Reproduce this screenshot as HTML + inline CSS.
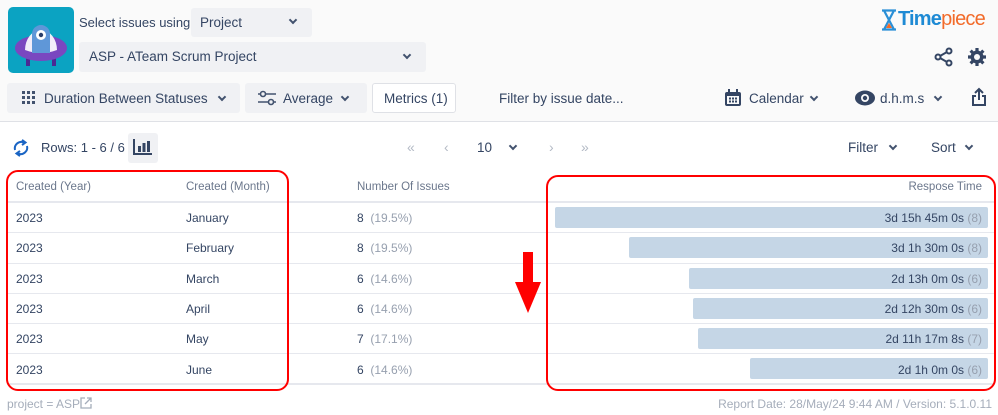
<!DOCTYPE html>
<html><head><meta charset="utf-8"><style>
*{box-sizing:border-box;margin:0;padding:0}
body{width:998px;height:415px;background:#fff;font-family:"Liberation Sans",sans-serif;color:#344563;position:relative;overflow:hidden;font-size:13px}
.a{position:absolute}
.hdr{left:0;top:0;width:998px;height:122px;background:#fafafa;border-bottom:1px solid #dfe1e6}
.dd{background:#f0f1f4;border-radius:3px}
.chev{display:inline-block;width:6px;height:6px;border-right:2px solid #42526e;border-bottom:2px solid #42526e;transform:rotate(45deg)}
.t{white-space:nowrap}
.m{font-size:13.5px}
.line{left:8px;width:986px;height:2px;background:#e6e8ee}
.bar{height:21px;background:#c5d6e6;border-radius:2px;right:10px}
.bt{right:16px;font-size:12px;color:#344563}
.g{color:#97a0af}
.c{font-size:12px}
</style></head><body>
<div class="a hdr"></div>
<!-- logo -->
<div class="a" style="left:8px;top:7px;width:66px;height:66px;background:#0ba3c2;border-radius:5px;overflow:hidden">
<svg width="66" height="66" viewBox="0 0 66 66"><rect x="18" y="48" width="4" height="11" fill="#4b2a94"/><rect x="44" y="48" width="4" height="11" fill="#4b2a94"/><ellipse cx="33" cy="41" rx="26" ry="13" fill="#7a47c0"/><path d="M17 43 A16 20 0 0 1 49 43 Q33 49 17 43z" fill="#ffffff" opacity="0.9"/><path d="M24 46 V27 a9 9 0 0 1 18 0 V46 z" fill="#5f97d8"/><circle cx="33" cy="28" r="5" fill="#fff"/><circle cx="33" cy="28" r="2.2" fill="#2a3f6b"/></svg></div>
<div class="a t" style="left:79px;top:15px;font-size:13px">Select issues using</div>
<div class="a dd" style="left:191px;top:8px;width:121px;height:29px"></div>
<div class="a t m" style="left:200px;top:15px">Project</div>
<div class="a chev" style="left:290px;top:17px"></div>
<div class="a dd" style="left:79px;top:42px;width:347px;height:30px"></div>
<div class="a t m" style="left:89px;top:49px">ASP - ATeam Scrum Project</div>
<div class="a chev" style="left:404px;top:52px"></div>
<!-- timepiece -->
<svg class="a" style="left:881px;top:9px" width="16" height="22" viewBox="0 0 16 22"><path d="M1 1.5H15M1 20.5H15M3 1.5 L13 20.5M13 1.5 L3 20.5" stroke="#2a8fd6" stroke-width="2.2" fill="none"/><path d="M5 19 L8 14 L11 19z" fill="#f26b2a"/></svg>
<div class="a t" style="left:898px;top:8px;font-size:20px;font-weight:bold;color:#1e8ad4;letter-spacing:-0.8px">Time<span style="color:#f26b2a;font-weight:normal">piece</span></div>
<svg class="a" style="left:934px;top:47px" width="20" height="20" viewBox="0 0 20 20"><circle cx="15" cy="4" r="2.5" fill="none" stroke="#344563" stroke-width="2"/><circle cx="4" cy="10" r="2.5" fill="none" stroke="#344563" stroke-width="2"/><circle cx="15" cy="16" r="2.5" fill="none" stroke="#344563" stroke-width="2"/><path d="M6 9 L13 5 M6 11 L13 15" stroke="#344563" stroke-width="2"/></svg>
<svg class="a" style="left:967px;top:47px" width="20" height="20" viewBox="0 0 20 20"><g stroke="#344563" stroke-width="3.2"><path d="M10 1V19M1 10H19M3.6 3.6L16.4 16.4M16.4 3.6L3.6 16.4"/></g><circle cx="10" cy="10" r="6.5" fill="#344563"/><circle cx="10" cy="10" r="3" fill="#fafafa"/></svg>
<!-- row 2 -->
<div class="a dd" style="left:7px;top:83px;width:233px;height:30px"></div>
<svg class="a" style="left:22px;top:91px" width="14" height="14"><g fill="#42526e"><rect x="0" y="0" width="3" height="3"/><rect x="5" y="0" width="3" height="3"/><rect x="10" y="0" width="3" height="3"/><rect x="0" y="5" width="3" height="3"/><rect x="5" y="5" width="3" height="3"/><rect x="10" y="5" width="3" height="3"/><rect x="0" y="10" width="3" height="3"/><rect x="5" y="10" width="3" height="3"/><rect x="10" y="10" width="3" height="3"/></g></svg>
<div class="a t m" style="left:44px;top:91px">Duration Between Statuses</div>
<div class="a chev" style="left:219px;top:94px"></div>
<div class="a dd" style="left:245px;top:83px;width:122px;height:30px"></div>
<svg class="a" style="left:258px;top:90px" width="18" height="16"><path d="M0 4H18M0 12H18" stroke="#42526e" stroke-width="1.6"/><circle cx="5" cy="4" r="2.5" fill="#f0f1f4" stroke="#42526e" stroke-width="1.6"/><circle cx="13" cy="12" r="2.5" fill="#f0f1f4" stroke="#42526e" stroke-width="1.6"/></svg>
<div class="a t m" style="left:283px;top:91px">Average</div>
<div class="a chev" style="left:342px;top:94px"></div>
<div class="a" style="left:372px;top:83px;width:84px;height:30px;border:1.5px solid #dfe1e6;border-radius:3px;background:#fff"></div>
<div class="a t m" style="left:384px;top:91px">Metrics (1)</div>
<div class="a t m" style="left:499px;top:91px">Filter by issue date...</div>
<svg class="a" style="left:724px;top:89px" width="18" height="18"><rect x="1" y="3" width="16" height="14" rx="2" fill="#344563"/><rect x="3" y="7" width="12" height="8" fill="#fafafa"/><rect x="4" y="0" width="2" height="4" fill="#344563"/><rect x="12" y="0" width="2" height="4" fill="#344563"/><g fill="#344563"><rect x="5" y="8.5" width="2" height="2"/><rect x="8" y="8.5" width="2" height="2"/><rect x="11" y="8.5" width="2" height="2"/><rect x="5" y="11.5" width="2" height="2"/><rect x="8" y="11.5" width="2" height="2"/><rect x="11" y="11.5" width="2" height="2"/></g></svg>
<div class="a t m" style="left:749px;top:91px">Calendar</div>
<div class="a chev" style="left:811px;top:94px"></div>
<svg class="a" style="left:855px;top:90px" width="20" height="16"><ellipse cx="10" cy="8" rx="10" ry="7.5" fill="#344563"/><circle cx="10" cy="8" r="4" fill="#fafafa"/><circle cx="10" cy="8" r="2.2" fill="#344563"/></svg>
<div class="a t m" style="left:880px;top:91px">d.h.m.s</div>
<div class="a chev" style="left:935px;top:94px"></div>
<svg class="a" style="left:971px;top:87px" width="16" height="20"><path d="M8 2V13M4 6L8 2L12 6M5 9H2V18H14V9H11" stroke="#344563" stroke-width="2" fill="none"/></svg>
<!-- row 3 -->
<svg class="a" style="left:12px;top:139px" width="18" height="18" viewBox="0 0 18 18"><path d="M3 11 A6.5 6.5 0 0 1 12 3.5 M15 7 A6.5 6.5 0 0 1 6 14.5" stroke="#1b65c4" stroke-width="2" fill="none"/><path d="M10 1 L13.5 3.5 L10 6" stroke="#1b65c4" stroke-width="2" fill="none"/><path d="M8 12 L4.5 14.5 L8 17" stroke="#1b65c4" stroke-width="2" fill="none"/></svg>
<div class="a t" style="left:41px;top:140px;font-size:13px">Rows: 1 - 6 / 6</div>
<div class="a dd" style="left:128px;top:133px;width:30px;height:30px"></div>
<svg class="a" style="left:133px;top:139px" width="20" height="16"><path d="M1 0V15H19" stroke="#344563" stroke-width="2" fill="none"/><rect x="5" y="7" width="3" height="6" fill="#344563"/><rect x="9.5" y="4" width="3" height="9" fill="#344563"/><rect x="14" y="2" width="3" height="11" fill="#344563"/></svg>
<div class="a t" style="left:407px;top:139px;color:#b3bac5;font-size:14px">«</div>
<div class="a t" style="left:444px;top:139px;color:#b3bac5;font-size:14px">‹</div>
<div class="a t m" style="left:477px;top:140px">10</div>
<div class="a chev" style="left:510px;top:143px"></div>
<div class="a t" style="left:549px;top:139px;color:#b3bac5;font-size:14px">›</div>
<div class="a t" style="left:581px;top:139px;color:#b3bac5;font-size:14px">»</div>
<div class="a t m" style="left:848px;top:140px">Filter</div>
<div class="a chev" style="left:890px;top:143px"></div>
<div class="a t m" style="left:931px;top:140px">Sort</div>
<div class="a chev" style="left:966px;top:143px"></div>
<!-- table -->
<div class="a t" style="left:16px;top:181px;font-size:11.5px;color:#6b778c">Created (Year)</div>
<div class="a t" style="left:186px;top:181px;font-size:11.5px;color:#6b778c">Created (Month)</div>
<div class="a t" style="left:357px;top:181px;font-size:11.5px;color:#6b778c">Number Of Issues</div>
<div class="a t" style="right:16px;top:181px;font-size:11.5px;color:#6b778c">Respose Time</div>
<div class="a line" style="top:201px"></div>
<div class="a line" style="top:232px;height:1px"></div>
<div class="a line" style="top:263px;height:1px"></div>
<div class="a line" style="top:293px;height:1px"></div>
<div class="a line" style="top:323px;height:1px"></div>
<div class="a line" style="top:353px;height:1px"></div>
<div class="a line" style="top:383px"></div>

<div class="a t c" style="left:16px;top:211px">2023</div><div class="a t c" style="left:186px;top:211px">January</div><div class="a t c" style="left:357px;top:211px">8 &nbsp;<span class="g">(19.5%)</span></div>
<div class="a t c" style="left:16px;top:241px">2023</div><div class="a t c" style="left:186px;top:241px">February</div><div class="a t c" style="left:357px;top:241px">8 &nbsp;<span class="g">(19.5%)</span></div>
<div class="a t c" style="left:16px;top:272px">2023</div><div class="a t c" style="left:186px;top:272px">March</div><div class="a t c" style="left:357px;top:272px">6 &nbsp;<span class="g">(14.6%)</span></div>
<div class="a t c" style="left:16px;top:302px">2023</div><div class="a t c" style="left:186px;top:302px">April</div><div class="a t c" style="left:357px;top:302px">6 &nbsp;<span class="g">(14.6%)</span></div>
<div class="a t c" style="left:16px;top:332px">2023</div><div class="a t c" style="left:186px;top:332px">May</div><div class="a t c" style="left:357px;top:332px">7 &nbsp;<span class="g">(17.1%)</span></div>
<div class="a t c" style="left:16px;top:363px">2023</div><div class="a t c" style="left:186px;top:363px">June</div><div class="a t c" style="left:357px;top:363px">6 &nbsp;<span class="g">(14.6%)</span></div>

<div class="a bar" style="left:555px;top:207px"></div><div class="a t bt" style="top:211px">3d 15h 45m 0s <span class="g">(8)</span></div>
<div class="a bar" style="left:629px;top:237px"></div><div class="a t bt" style="top:241px">3d 1h 30m 0s <span class="g">(8)</span></div>
<div class="a bar" style="left:689px;top:268px"></div><div class="a t bt" style="top:272px">2d 13h 0m 0s <span class="g">(6)</span></div>
<div class="a bar" style="left:693px;top:298px"></div><div class="a t bt" style="top:302px">2d 12h 30m 0s <span class="g">(6)</span></div>
<div class="a bar" style="left:698px;top:328px"></div><div class="a t bt" style="top:332px">2d 11h 17m 8s <span class="g">(7)</span></div>
<div class="a bar" style="left:750px;top:358px"></div><div class="a t bt" style="top:363px">2d 1h 0m 0s <span class="g">(6)</span></div>

<div class="a" style="left:6px;top:170px;width:283px;height:221px;border:2px solid #f00;border-radius:12px"></div>
<div class="a" style="left:546px;top:175px;width:450px;height:216px;border:2px solid #f00;border-radius:12px"></div>
<svg class="a" style="left:515px;top:252px" width="26" height="62"><rect x="8" y="0" width="10" height="30" fill="#f00"/><path d="M0 30H26L13 61z" fill="#f00"/></svg>

<div class="a t" style="left:7px;top:397px;font-size:12px;color:#a5adba">project = ASP</div>
<svg class="a" style="left:80px;top:397px" width="12" height="12"><path d="M5 1H1V11H11V7M7 1H11V5M11 1L5 7" stroke="#a5adba" stroke-width="1.3" fill="none"/></svg>
<div class="a t" style="right:6px;top:397px;font-size:12px;color:#a5adba">Report Date: 28/May/24 9:44 AM / Version: 5.1.0.11</div>
</body></html>
